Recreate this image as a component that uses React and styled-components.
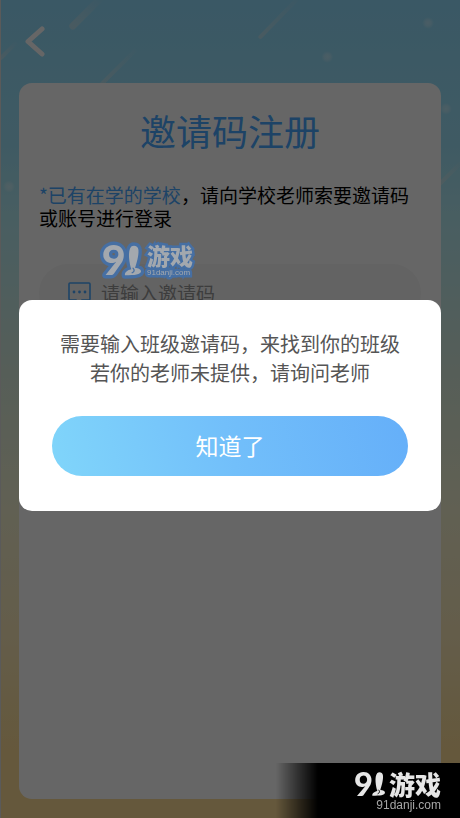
import { useState } from 'react';
import styled, { createGlobalStyle, css } from 'styled-components';

const GlobalStyle = createGlobalStyle`
    * {
        box-sizing: border-box;
    }

    body {
        margin: 0;
        font-family: 'Noto Sans CJK SC', 'Liberation Sans', sans-serif;
        color: #000;
    }
`;

const Page = styled.div`
    position: relative;
    display: flex;
    flex-direction: column;
    min-height: 100vh;
    border-left: 1px solid #e0e0e0;
    background: linear-gradient(
        to bottom,
        #91dcfc 0%,
        #9fe2f8 18%,
        #b8ecf2 28%,
        #d8ecdc 46%,
        #f2f0d0 62%,
        #fae8b8 78%,
        #fcdc96 92%
    );
`;

const Sky = styled.svg`
    position: absolute;
    top: 0;
    left: 0;
    width: 100%;
    pointer-events: none;
`;

const Header = styled.header`
    position: relative;
    display: flex;
    align-items: center;
    height: 83px;
    padding: 0 20px;
`;

const BackButton = styled.button`
    display: flex;
    padding: 4px;
    border: none;
    background: none;
    color: #fff;
    cursor: pointer;
`;

const Card = styled.main`
    position: relative;
    flex: 1;
    margin: 0 19px 19px 18px;
    padding: 20px;
    border-radius: 13px;
    background-color: #fff;
`;

const Title = styled.h1`
    margin: 0;
    font-size: 36px;
    font-weight: 400;
    line-height: 54px;
    text-align: center;
    color: #4aa8ff;
`;

const Hint = styled.p`
    margin: 26px 0 0;
    font-size: 19px;
    line-height: 23px;
`;

const HintMark = styled.span`
    color: #4aa8ff;
`;

const Field = styled.label`
    display: flex;
    align-items: center;
    gap: 10px;
    height: 58px;
    margin-top: 35px;
    padding: 0 29px;
    border-radius: 29px;
    background-color: #f7f7f7;
    color: #4aa8ff;
`;

const CodeInput = styled.input`
    flex: 1;
    min-width: 0;
    padding: 0 0 2px;
    border: none;
    outline: none;
    background: none;
    font-family: inherit;
    font-size: 19px;
    color: #333;

    &::placeholder {
        color: #999;
        opacity: 1;
    }
`;

const Overlay = styled.div`
    position: fixed;
    inset: 0;
    display: flex;
    align-items: center;
    padding: 0 19px 7px;
    background-color: rgba(0, 0, 0, 0.6);
`;

const Dialog = styled.section`
    flex: 1;
    padding: 29px 33px 35px;
    border-radius: 13px;
    background-color: #fff;
`;

const Message = styled.p`
    margin: 0 -33px 29px;
    font-size: 20px;
    line-height: 29px;
    text-align: center;
    color: #555;
`;

const ConfirmButton = styled.button`
    display: block;
    width: 100%;
    height: 60px;
    padding: 0 0 2px;
    border: none;
    border-radius: 30px;
    background: linear-gradient(75deg, #80d5fa 0%, #72bffa 50%, #65aff9 100%);
    font-family: inherit;
    font-size: 23px;
    color: #fff;
    cursor: pointer;
`;

const halo = css`
    -webkit-text-stroke: 5px #466fa3;
    paint-order: stroke fill;
`;

const Stamp = styled.div`
    position: absolute;
    top: 244px;
    left: 103px;
    display: flex;
    gap: 6px;
    color: #a3a8ae;
`;

const StampText = styled.div`
    display: flex;
    flex-direction: column;
    gap: 1px;
`;

const StampName = styled.span`
    font-size: 23px;
    font-weight: 900;
    line-height: 23px;
    ${halo}
`;

const StampSite = styled.span`
    font-family: 'Liberation Sans', sans-serif;
    font-size: 8px;
    line-height: 9px;
    ${halo}
`;

const Ribbon = styled.footer`
    position: fixed;
    right: 0;
    bottom: 0;
    display: flex;
    flex-direction: column;
    align-items: flex-end;
    width: 40%;
    height: 55px;
    padding: 6px 19px 0 0;
    background: linear-gradient(to right, transparent 0, #000 42px);
`;

const RibbonBrand = styled.div`
    display: flex;
    align-items: center;
    gap: 4px;
    font-size: 26px;
    font-weight: 900;
    line-height: 29px;
    color: #e6e6e6;
`;

const RibbonSite = styled.span`
    font-family: 'Liberation Sans', sans-serif;
    font-size: 12px;
    line-height: 14px;
    color: #a6a6a6;
`;

function NinetyOne({ width, outline }) {
    const stroke = outline
        ? { stroke: outline, strokeWidth: 16, strokeLinejoin: 'round', paintOrder: 'stroke' }
        : {};

    return (
        <svg
            width={width}
            viewBox="0 0 90 72"
            fill="currentColor"
            overflow="visible"
            role="img"
            aria-label="91"
        >
            <g {...stroke}>
                <path d="M67 3 C73 -1 83 1 84 11 C85 26 79 43 76 54 C84 54 90 57 90 62 C89 69 76 71 52 71 C51 64 58 59 67 57 C63 45 57 14 67 3 Z" />
                <text
                    x="-3"
                    y="71"
                    fontFamily="Lato, sans-serif"
                    fontSize="98"
                    fontWeight="900"
                >
                    9
                </text>
            </g>
            <path
                d="M71 54 C75 58 75 62 69 65"
                fill="none"
                stroke={outline || '#000'}
                strokeWidth="3"
                strokeLinecap="round"
            />
        </svg>
    );
}

const meteors = [
    { x1: 72, y1: 26, x2: 98, y2: 0, width: 7 },
    { x1: 101, y1: 84, x2: 134, y2: 51, width: 4 },
    { x1: 260, y1: 37, x2: 296, y2: 0, width: 4 },
    { x1: 0, y1: 58, x2: 14, y2: 44, width: 4 },
    { x1: 440, y1: 184, x2: 460, y2: 164, width: 4 },
];

const stars = [
    { cx: 327, cy: 57 },
    { cx: 428, cy: 23 },
    { cx: 446, cy: 109 },
    { cx: 8, cy: 187 },
];

function App() {
    const [aberto, setAberto] = useState(true);

    return (
        <>
            <GlobalStyle />
            <Page>
                <Sky viewBox="0 0 460 200" aria-hidden="true">
                    <defs>
                        <radialGradient id="star">
                            <stop offset="0" stopColor="#fff" stopOpacity="0.35" />
                            <stop offset="0.5" stopColor="#fff" stopOpacity="0.25" />
                            <stop offset="1" stopColor="#fff" stopOpacity="0" />
                        </radialGradient>
                        {meteors.map((m, i) => (
                            <linearGradient
                                key={i}
                                id={`meteor${i}`}
                                gradientUnits="userSpaceOnUse"
                                x1={m.x1}
                                y1={m.y1}
                                x2={m.x2}
                                y2={m.y2}
                            >
                                <stop offset="0" stopColor="#ffe9dc" stopOpacity="0.32" />
                                <stop offset="1" stopColor="#ffe9dc" stopOpacity="0.04" />
                            </linearGradient>
                        ))}
                    </defs>
                    {meteors.map((m, i) => (
                        <line
                            key={i}
                            x1={m.x1}
                            y1={m.y1}
                            x2={m.x2}
                            y2={m.y2}
                            stroke={`url(#meteor${i})`}
                            strokeWidth={m.width}
                            strokeLinecap="round"
                        />
                    ))}
                    {stars.map((s) => (
                        <circle key={s.cx} cx={s.cx} cy={s.cy} r="6" fill="url(#star)" />
                    ))}
                </Sky>

                <Header>
                    <BackButton aria-label="返回">
                        <svg width="20" height="32" viewBox="0 0 20 32" fill="none">
                            <path
                                d="M17 3 L3 15.5 L17 28"
                                stroke="currentColor"
                                strokeWidth="5"
                                strokeLinecap="round"
                                strokeLinejoin="round"
                            />
                        </svg>
                    </BackButton>
                </Header>

                <Card>
                    <Title>邀请码注册</Title>
                    <Hint>
                        <HintMark>*已有在学的学校</HintMark>
                        ，请向学校老师索要邀请码或账号进行登录
                    </Hint>
                    <Field>
                        <svg width="23" height="22" viewBox="0 0 23 22" fill="none">
                            <path
                                d="M2 1 H21 Q22 1 22 2 V17 Q22 18 21 18 H14 L11 21 L8 18 H2 Q1 18 1 17 V2 Q1 1 2 1 Z"
                                stroke="currentColor"
                                strokeWidth="1.6"
                            />
                            <g fill="currentColor">
                                <circle cx="6" cy="10" r="1.4" />
                                <circle cx="11.5" cy="10" r="1.4" />
                                <circle cx="17" cy="10" r="1.4" />
                            </g>
                        </svg>
                        <CodeInput aria-label="邀请码" placeholder="请输入邀请码" />
                    </Field>
                </Card>
            </Page>

            {aberto && (
                <Overlay>
                    <Dialog role="dialog" aria-modal="true">
                        <Message>
                            需要输入班级邀请码，来找到你的班级
                            <br />
                            若你的老师未提供，请询问老师
                        </Message>
                        <ConfirmButton onClick={() => setAberto(false)}>知道了</ConfirmButton>
                    </Dialog>
                </Overlay>
            )}

            <Stamp>
                <NinetyOne width={38} outline="#466fa3" />
                <StampText>
                    <StampName>游戏</StampName>
                    <StampSite>91danji.com</StampSite>
                </StampText>
            </Stamp>

            <Ribbon>
                <RibbonBrand>
                    <NinetyOne width={30} />
                    游戏
                </RibbonBrand>
                <RibbonSite>91danji.com</RibbonSite>
            </Ribbon>
        </>
    );
}

export default App;
